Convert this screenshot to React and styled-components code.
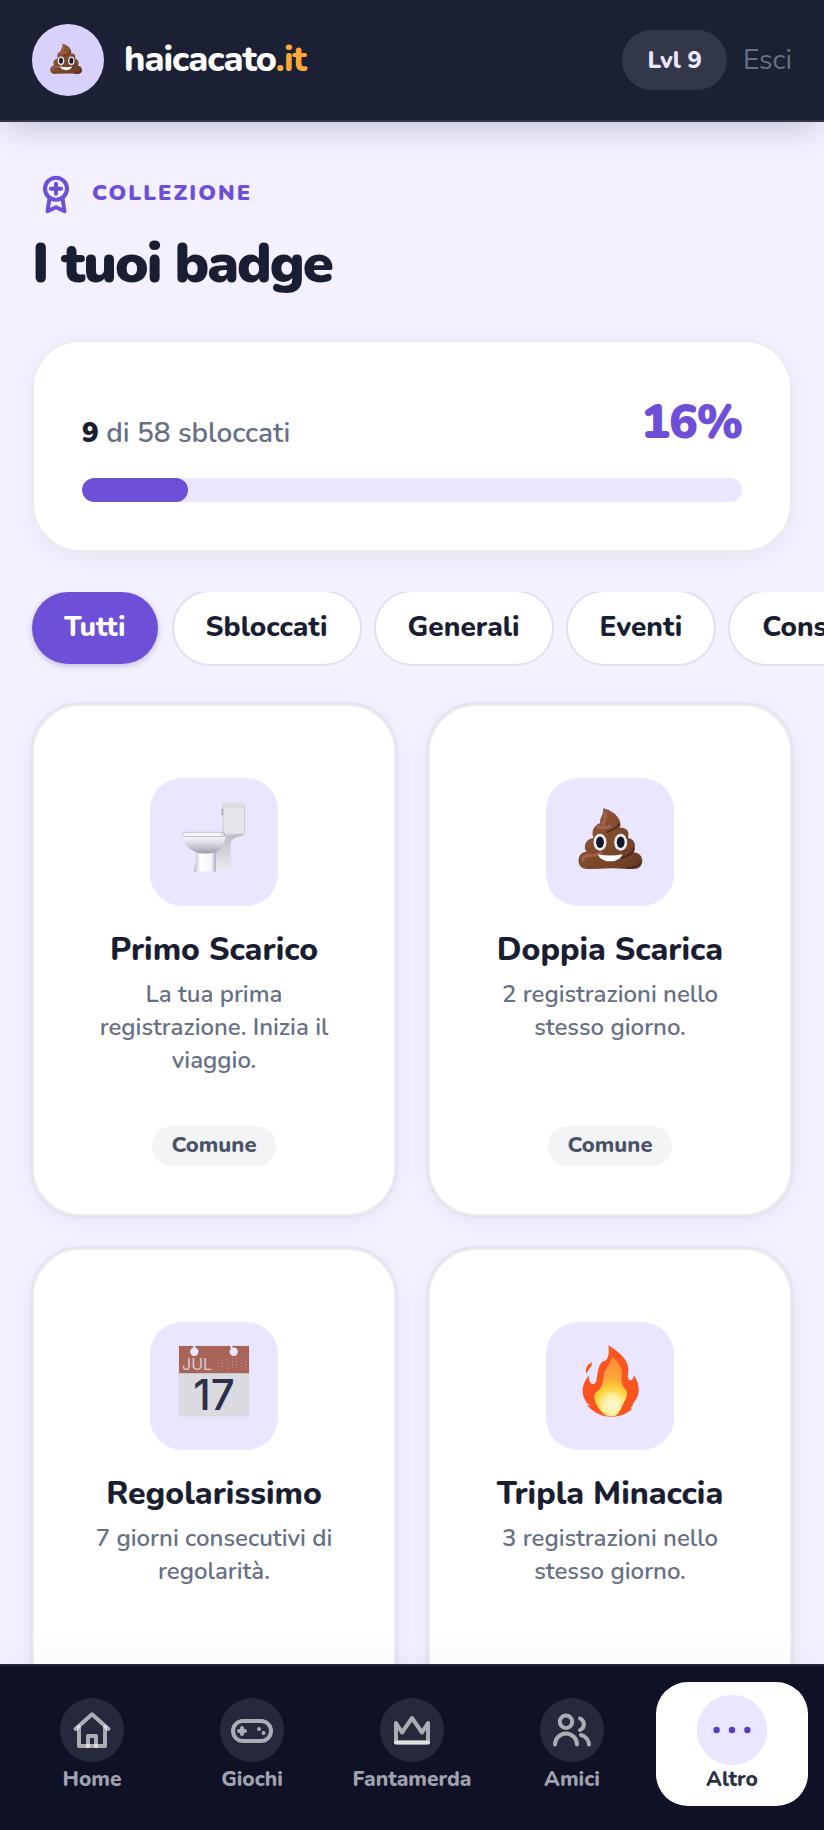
import React, { useState } from "react";
import styled, { createGlobalStyle, css } from "styled-components";

const GlobalStyle = createGlobalStyle`
  *, *::before, *::after { box-sizing: border-box; }
  body {
    margin: 0;
    background: #f3f1ff;
    color: #1a1e33;
    font-family: "Nunito", "Lato", "Open Sans", sans-serif;
    font-size: 28px;
    line-height: 40px;
  }
  button { font: inherit; color: inherit; border: 0; background: none; padding: 0; cursor: pointer; }
  h1, h2, p { margin: 0; }
  a { color: inherit; text-decoration: none; }
`;

const Shell = styled.div`
  height: 100vh;
  display: flex;
  flex-direction: column;
`;

const Header = styled.header`
  flex: none;
  z-index: 1;
  display: flex;
  align-items: center;
  justify-content: space-between;
  padding: 24px 32px;
  background: #1c2034;
  border-bottom: 2px solid #32364a;
  box-shadow: 0 12px 28px -6px rgba(15, 18, 38, 0.2);
`;

const Brand = styled.a`
  display: flex;
  align-items: center;
  gap: 20px;
  color: #fff;
  font-size: 36px;
  font-weight: 800;
  line-height: 42px;
  letter-spacing: -1px;
`;

const Avatar = styled.span`
  width: 72px;
  height: 72px;
  padding: 0 4px 4px 0;
  display: flex;
  align-items: center;
  justify-content: center;
  border-radius: 50%;
  background: #d8d1fb;
`;

const Accent = styled.span`
  color: #ffa93a;
`;

const Account = styled.div`
  display: flex;
  align-items: center;
  gap: 16px;
`;

const Level = styled.span`
  padding: 0 25px;
  border-radius: 30px;
  background: #33374a;
  color: #ebe7ff;
  font-size: 24px;
  font-weight: 800;
  line-height: 60px;
`;

const Logout = styled.button`
  && { color: #667085; }
`;

const Main = styled.main`
  flex: 1;
  min-height: 0;
  overflow-y: auto;
  scrollbar-width: none;
  padding: 48px 32px;
`;

const Eyebrow = styled.p`
  display: flex;
  align-items: flex-start;
  gap: 12px;
  color: #6d4fd8;
  font-size: 22px;
  font-weight: 900;
  line-height: 46px;
  letter-spacing: 2px;
  text-transform: uppercase;
`;

const Title = styled.h1`
  font-size: 56px;
  font-weight: 900;
  line-height: 64px;
  letter-spacing: -2px;
  margin: 14px 0 44px;
`;

const surface = css`
  background: #fff;
  border: 2px solid #ececee;
  border-radius: 48px;
`;

const ProgressCard = styled.section`
  ${surface}
  padding: 48px;
  box-shadow: 0 4px 20px rgba(26, 30, 51, 0.06);
`;

const ProgressHead = styled.div`
  display: flex;
  align-items: flex-end;
  justify-content: space-between;
  margin-bottom: 24px;
`;

const Count = styled.label`
  color: #667085;
  font-weight: 600;
  line-height: 42px;
  strong { color: #1a1e33; font-weight: 900; }
`;

const Percent = styled.span`
  color: #6d4fd8;
  font-size: 48px;
  font-weight: 900;
  line-height: 64px;
  letter-spacing: -1px;
`;

const Bar = styled.progress`
  display: block;
  width: 100%;
  height: 24px;
  appearance: none;
  border: 0;
  border-radius: 12px;
  background: #eae6ff;
  overflow: hidden;
  &::-webkit-progress-bar { background: #eae6ff; border-radius: 12px; }
  &::-webkit-progress-value { background: #6d4fd8; border-radius: 12px; }
`;

const Filters = styled.div`
  display: flex;
  gap: 16px;
  margin: 40px -32px 32px;
  padding: 0 32px 8px;
  overflow-x: auto;
  scrollbar-width: none;
`;

const Chip = styled.button`
  && {
    flex: none;
    padding: 0 32px 2px;
    border-radius: 36px;
    font-weight: 800;
    line-height: 70px;
    background: ${(p) => (p.$active ? "#6d4fd8" : "#fff")};
    color: ${(p) => (p.$active ? "#fff" : "#1a1e33")};
    box-shadow: ${(p) => (p.$active ? "0 2px 6px rgba(60, 40, 140, 0.25)" : "0 0 0 2px #e2dff0")};
  }
`;

const Grid = styled.div`
  display: grid;
  grid-template-columns: 1fr 1fr;
  gap: 32px;
`;

const BadgeCard = styled.article`
  ${surface}
  display: flex;
  flex-direction: column;
  align-items: center;
  padding: 72px 48px 48px;
  text-align: center;
  box-shadow: 0 0 0 2px #e5e2f2, 0 4px 20px rgba(26, 30, 51, 0.06);
`;

const Tile = styled.div`
  width: 128px;
  height: 128px;
  padding-bottom: 10px;
  display: flex;
  align-items: center;
  justify-content: center;
  border-radius: 32px;
  background: #eae6ff;
`;

const BadgeName = styled.h2`
  margin-top: 20px;
  font-size: 32px;
  font-weight: 800;
  line-height: 48px;
`;

const BadgeText = styled.p`
  min-height: 102px;
  margin: 4px 0 46px;
  color: #667085;
  font-size: 24px;
  font-weight: 600;
  line-height: 33px;
`;

const Rarity = styled.span`
  padding: 0 20px 2px;
  border-radius: 20px;
  background: #f3f4f6;
  color: #4b5167;
  font-size: 22px;
  font-weight: 800;
  line-height: 38px;
`;

const Nav = styled.nav`
  flex: none;
  z-index: 1;
  display: grid;
  grid-template-columns: repeat(5, minmax(0, 1fr));
  gap: 8px;
  padding: 16px 16px 24px;
  background: #0f1226;
  border-top: 2px solid #22263a;
  box-shadow: 0 -8px 32px rgba(15, 18, 38, 0.03);
`;

const NavIcon = styled.span`
  width: 64px;
  height: 64px;
  display: flex;
  align-items: center;
  justify-content: center;
  border-radius: 50%;
  background: #26293c;
`;

const NavLink = styled.a`
  display: flex;
  flex-direction: column;
  align-items: center;
  gap: 5px;
  padding: 16px 0 15px;
  border-radius: 32px;
  color: #a0a2ae;
  font-size: 21px;
  font-weight: 800;
  line-height: 24px;
  ${(p) =>
    p.$active &&
    css`
      background: #fff;
      color: #2b3148;
      ${NavIcon} { background: #eae6ff; transform: scale(1.1); }
    `}
`;

const Stroke = styled.svg`
  flex: none;
  fill: none;
  stroke: ${(p) => p.$color || "rgba(255, 255, 255, 0.62)"};
  stroke-width: 4;
  stroke-linecap: round;
  stroke-linejoin: round;
`;

const RibbonIcon = () => (
  <Stroke $color="#6d4fd8" width="48" height="48" viewBox="0 0 48 48" aria-hidden="true">
    <circle cx="24" cy="18.7" r="11" />
    <path d="M24 13.7v10M19 18.7h10M17.3 29.5 15.500 41.2l8.500-4 8.500 4-1.800-11.700" />
  </Stroke>
);

const HomeIcon = () => (
  <Stroke width="40" height="40" viewBox="0 0 40 40" aria-hidden="true">
    <path d="M3.5 19 20 4.3 36.5 19" />
    <path d="M7 17v19h26V17" />
    <path d="M16 36V26h8v10" />
  </Stroke>
);

const PadIcon = () => (
  <Stroke width="42" height="40" viewBox="-1 0 42 40" aria-hidden="true">
    <rect x="1" y="11" width="38" height="20" rx="10" />
    <path d="M7 21h6M10 18v6" />
    <path d="M27 19h.01M31.5 23h.01" />
  </Stroke>
);

const CrownIcon = () => (
  <Stroke width="40" height="40" viewBox="0 0 40 40" aria-hidden="true">
    <path d="M4 32.5V13l6 9.5L20 8l10 14.5L36 13v19.5z" />
    <path d="M4 32.5h32" />
  </Stroke>
);

const FriendsIcon = () => (
  <Stroke width="40" height="40" viewBox="0 0 40 40" aria-hidden="true">
    <circle cx="14" cy="11.7" r="6.2" />
    <path d="M3 34.5a11 11 0 0 1 22 0" />
    <path d="M28 8.5a6.2 6.2 0 0 1 0 11.5M29 25a10.500 10.500 0 0 1 8 9.500" />
  </Stroke>
);

const MoreIcon = () => (
  <svg width="40" height="40" viewBox="0 0 40 40" fill="#5a3cc6" aria-hidden="true">
    <circle cx="6" cy="20" r="2.9" />
    <circle cx="20" cy="20" r="2.9" />
    <circle cx="34" cy="20" r="2.9" />
  </svg>
);

const PoopArt = ({ size = 72 }) => (
  <svg width={size} height={size} viewBox="0 0 72 72" aria-hidden="true">
    <defs>
      <linearGradient id="poop" x1="0" y1="0" x2="1" y2="1">
        <stop offset="0" stopColor="#9c5a44" />
        <stop offset="0.5" stopColor="#7f4b2b" />
        <stop offset="1" stopColor="#643a24" />
      </linearGradient>
    </defs>
    <path
      fill="url(#poop)"
      d="M29 7.300C36 8.500 46.500 15 46.500 23.500q0 2-.7 3.300C51 26.200 54.500 29 54.500 33q0 2-.8 3.800C58 37.500 61 41 61 45q0 3-1.500 6.300C64.500 51.500 68.300 55 68.300 60c0 5-3.800 8-8.300 8-8 0-14-.8-22-.8S22 68 13 68c-5 0-8.500-3.500-8.500-8.500 0-5 3.500-8.700 8-8.700-1.500-2-2-4-1.500-6.300.6-4 4-7 8.500-7.500-2.500-6.500 0-12.500 6.800-15C25 17 30 14.500 29 7.300z"
    />
    <g fill="none" strokeLinecap="round">
      <path stroke="#b0695a" strokeWidth="3" opacity=".7" d="M31 12c1.500 4-1 7-1.500 11M24 26c5 1.500 9 .5 12-1M13 54c5 1 10 0 14-2M9 59c0-3 2-4 4-4" />
      <path stroke="#45261a" strokeWidth="2" opacity=".75" d="M45 23c-2 4-6 6-12 8M53 36c0 2-1 3-3 4M60 48c-1 4-6 7-12 9M66 62c-3 4-8 5-13 5" />
    </g>
    <ellipse cx="26" cy="41.300" rx="6.500" ry="8.500" fill="#eeeef2" />
    <ellipse cx="46.700" cy="41.300" rx="6.500" ry="8.500" fill="#eeeef2" />
    <ellipse cx="26" cy="41.300" rx="3.900" ry="5.700" fill="#15172b" />
    <ellipse cx="46.700" cy="41.300" rx="3.900" ry="5.700" fill="#15172b" />
    <path fill="#fff" d="M24 53.200q12.200 2.500 24.400 0c-1.500 4.800-6.500 7.100-12.200 7.100S25.500 58 24 53.200z" />
  </svg>
);

const ToiletArt = () => (
  <svg width="72" height="72" viewBox="0 0 72 72" aria-hidden="true">
    <defs>
      <linearGradient id="bowl" x1="0" y1="0" x2="0" y2="1">
        <stop offset="0" stopColor="#fafafc" />
        <stop offset="0.4" stopColor="#dcdce3" />
        <stop offset="1" stopColor="#9d9fae" />
      </linearGradient>
      <linearGradient id="foot" x1="0" y1="0" x2="1" y2="0">
        <stop offset="0" stopColor="#b4b5c0" />
        <stop offset="0.3" stopColor="#fff" />
        <stop offset="0.75" stopColor="#f6f6f8" />
        <stop offset="1" stopColor="#9da0ae" />
      </linearGradient>
      <linearGradient id="rear" x1="0" y1="0" x2="0" y2="1">
        <stop offset="0" stopColor="#b9bbc6" />
        <stop offset="1" stopColor="#ececf0" />
      </linearGradient>
    </defs>
    <path fill="url(#rear)" d="M40 35 66.500 32.500c-1 2-3 2.600-6 3.200-5.500 1.200-8 4-8 9 0 10 1 18 3.300 25.500H38z" />
    <path fill="#e6e6ea" stroke="#c9cad2" strokeWidth="1" d="M45 6h21.500v24.500q0 2.500-2.500 2.500H45z" />
    <rect x="43.700" y="1.500" width="24" height="4.500" rx="1.500" fill="#dcdde2" />
    <path stroke="#a5a7b3" strokeWidth="1.500" d="M44.300 7.500v6.500" />
    <path fill="url(#foot)" d="M18 48h21c-1.200 7-1.200 15-.8 22.500H15.500C17.500 63 18 56 18 48z" />
    <path fill="url(#bowl)" d="M5 35h42.500c-.5 7-4 13-10 16-6 2-14 2-20 0C9.500 47.500 5 42 5 35z" />
    <rect x="5" y="31.300" width="41.500" height="4.200" rx="2.100" fill="#f6f6f9" stroke="#b5b7c3" strokeWidth=".8" />
    <circle cx="45.500" cy="34" r="1.500" fill="#fff" stroke="#8e91a1" strokeWidth=".7" />
  </svg>
);

const CalendarArt = () => (
  <svg width="72" height="72" viewBox="0 0 72 72" aria-hidden="true">
    <rect x=".5" y=".5" width="71" height="71" fill="#dbdae0" />
    <rect x="1" y="1" width="70" height="27" fill="#a9645a" />
    <path stroke="#c4c4cc" d="M.5 28.500h71" />
    <path stroke="#eae6ff" strokeWidth="2" d="M16.300 0v5M52.500 0l2 5" />
    <circle cx="16.300" cy="6.700" r="4.200" fill="#eae6ff" />
    <circle cx="55.700" cy="6.700" r="4.200" fill="#eae6ff" />
    <path stroke="#c79a98" strokeWidth="1" strokeDasharray="1 2" d="M40.500 18v7M44.500 15v10M49.500 14v11M54.500 13v12M58.500 13v12M63.500 15v10M67.500 13v12" />
    <text x="4" y="24.500" fontFamily="Inter, sans-serif" fontSize="16" fill="#d6ccd4">JUL</text>
    <text x="36" y="64.500" textAnchor="middle" fontFamily="Inter, sans-serif" fontSize="42" fontWeight="500" fill="#2c304a">17</text>
  </svg>
);

const FlameArt = () => (
  <svg width="72" height="72" viewBox="0 0 72 72" aria-hidden="true">
    <defs>
      <radialGradient id="core" cx="38" cy="60" r="50" gradientUnits="userSpaceOnUse">
        <stop offset="0" stopColor="#fbf6dc" />
        <stop offset="0.180" stopColor="#fff0a0" />
        <stop offset="0.340" stopColor="#ffd03a" />
        <stop offset="0.550" stopColor="#ffa53c" />
        <stop offset="1" stopColor="#ff8a30" />
      </radialGradient>
    </defs>
    <path
      fill="#fb541f"
      d="M34.300.3C44 6.500 53 13 54.300 23c.4 4-1.300 8 .2 11 2.500 3 5.500 0 5.300-4.300C63 35 65 40 64.700 46c-.3 5-2.500 8.500-5.700 12.500l-.8 3.500-2 .5 1.800 1.500C52 69.500 45 71.700 38 71.700c-9 0-17-3-23.300-9.700l-2.200-1.500 3.500.5C11 56.500 8.300 51 8.700 45c.3-6 3-10.500 6.200-14.700-.6 5.700 2 9 4.800 9 3.300-1.300 3-6 3.800-11 .8-5 2-8.500 4.500-11.600 5-.2 8-4.700 6.300-16.400z"
    />
    <path fill="#fb541f" d="M17.700 17.300c1 5-3.700 6.200-5 11.500-2.200-5 .8-9.300 5-11.500z" />
    <path
      fill="url(#core)"
      d="M38 11.500C47 19 49 25 47.500 33c-.4 4 1 8.500 4 11.500 2.500 2 2 7-.5 11-3.500 6-5 12-9 15q-5 1.500-10 0C27 67 22 61 20.500 54c-.5-3-.3-5 1.500-7 5-2.500 7-8 7.300-14 .3-8 6.700-12 8.700-21.500z"
    />
  </svg>
);

const filters = ["Tutti", "Sbloccati", "Generali", "Eventi", "Consistenza"];

const badges = [
  { name: "Primo Scarico", text: "La tua prima registrazione. Inizia il viaggio.", rarity: "Comune", Art: ToiletArt },
  { name: "Doppia Scarica", text: "2 registrazioni nello stesso giorno.", rarity: "Comune", Art: PoopArt },
  { name: "Regolarissimo", text: "7 giorni consecutivi di regolarità.", rarity: "Comune", Art: CalendarArt },
  { name: "Tripla Minaccia", text: "3 registrazioni nello stesso giorno.", rarity: "Comune", Art: FlameArt },
];

const links = [
  { label: "Home", Icon: HomeIcon },
  { label: "Giochi", Icon: PadIcon },
  { label: "Fantamerda", Icon: CrownIcon },
  { label: "Amici", Icon: FriendsIcon },
  { label: "Altro", Icon: MoreIcon, active: true },
];

export default function App() {
  const [filter, setFilter] = useState("Tutti");
  return (
    <Shell>
      <GlobalStyle />
      <Header>
        <Brand href="#home">
          <Avatar><PoopArt size={36} /></Avatar>
          <span>haicacato<Accent>.it</Accent></span>
        </Brand>
        <Account>
          <Level>Lvl 9</Level>
          <Logout type="button">Esci</Logout>
        </Account>
      </Header>
      <Main>
        <Eyebrow><RibbonIcon />Collezione</Eyebrow>
        <Title>I tuoi badge</Title>
        <ProgressCard>
          <ProgressHead>
            <Count htmlFor="unlocked"><strong>9</strong> di 58 sbloccati</Count>
            <Percent>16%</Percent>
          </ProgressHead>
          <Bar id="unlocked" value="16" max="100" />
        </ProgressCard>
        <Filters>
          {filters.map((name) => (
            <Chip key={name} type="button" $active={name === filter} aria-pressed={name === filter} onClick={() => setFilter(name)}>
              {name}
            </Chip>
          ))}
        </Filters>
        <Grid>
          {badges.map(({ name, text, rarity, Art }) => (
            <BadgeCard key={name}>
              <Tile><Art /></Tile>
              <BadgeName>{name}</BadgeName>
              <BadgeText>{text}</BadgeText>
              <Rarity>{rarity}</Rarity>
            </BadgeCard>
          ))}
        </Grid>
      </Main>
      <Nav>
        {links.map(({ label, Icon, active }) => (
          <NavLink key={label} href={`#${label.toLowerCase()}`} $active={active} aria-current={active ? "page" : undefined}>
            <NavIcon><Icon /></NavIcon>
            {label}
          </NavLink>
        ))}
      </Nav>
    </Shell>
  );
}
